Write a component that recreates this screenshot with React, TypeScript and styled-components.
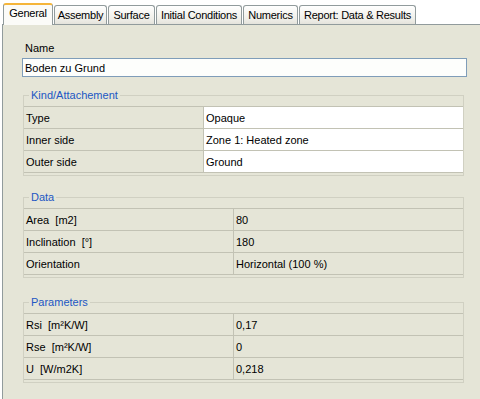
import React from "react";
import styled, { createGlobalStyle } from "styled-components";

const panelColor = "#e5e5d7";
const tabBorder = "#919b9c";
const frameColor = "#d0d0c2";
const rowLine = "#c2c2b4";

const GlobalStyle = createGlobalStyle`
  body {
    margin: 0;
    background: #ffffff;
    font-family: "Liberation Sans", Arial, sans-serif;
    font-size: 11px;
    color: #000000;
  }
`;

type Row = { label: string; value: string };

const tabs = [
  { label: "General", width: 50 },
  { label: "Assembly", width: 53 },
  { label: "Surface", width: 47 },
  { label: "Initial Conditions", width: 86 },
  { label: "Numerics", width: 55 },
  { label: "Report: Data & Results", width: 117 },
];

const kindRows: Row[] = [
  { label: "Type", value: "Opaque" },
  { label: "Inner side", value: "Zone 1: Heated zone" },
  { label: "Outer side", value: "Ground" },
];

const dataRows: Row[] = [
  { label: "Area  [m2]", value: "80" },
  { label: "Inclination  [°]", value: "180" },
  { label: "Orientation", value: "Horizontal (100 %)" },
];

const paramRows: Row[] = [
  { label: "Rsi  [m²K/W]", value: "0,17" },
  { label: "Rse  [m²K/W]", value: "0" },
  { label: "U  [W/m2K]", value: "0,218" },
];

const PropertyGroup = ({
  title,
  rows,
  split,
  white,
  gap,
}: {
  title: string;
  rows: Row[];
  split: number;
  white?: boolean;
  gap: number;
}) => (
  <Group $gap={gap}>
    <Legend>{title}</Legend>
    <Table>
      {rows.map((row) => (
        <TableRow key={row.label} $split={split}>
          <KeyCell>{row.label}</KeyCell>
          <ValueCell $white={white}>{row.value}</ValueCell>
        </TableRow>
      ))}
    </Table>
  </Group>
);

const App = () => {
  return (
    <Page>
      <GlobalStyle />
      <TabStrip>
        {tabs.map((tab, i) => (
          <Tab key={tab.label} $active={i === 0} $width={tab.width}>
            {tab.label}
          </Tab>
        ))}
      </TabStrip>
      <Panel>
        <NameLabel>Name</NameLabel>
        <NameInput readOnly value="Boden zu Grund" />
        <PropertyGroup title="Kind/Attachement" rows={kindRows} split={179} white gap={18} />
        <PropertyGroup title="Data" rows={dataRows} split={209} gap={21} />
        <PropertyGroup title="Parameters" rows={paramRows} split={209} gap={24} />
      </Panel>
    </Page>
  );
};

const Page = styled.div`
  width: 480px;
  height: 399px;
  display: flex;
  flex-direction: column;
  padding-left: 2px;
  box-sizing: border-box;
  overflow: hidden;
`;

const TabStrip = styled.div`
  height: 25px;
  flex: none;
  display: flex;
  align-items: flex-end;
  gap: 1px;
  padding-left: 1px;
  box-sizing: border-box;
  border-bottom: 1px solid ${tabBorder};
`;

const Tab = styled.div<{ $active?: boolean; $width: number }>`
  box-sizing: border-box;
  width: ${(p) => p.$width}px;
  height: ${(p) => (p.$active ? "22px" : "19px")};
  margin-bottom: ${(p) => (p.$active ? "-1px" : "0")};
  padding-top: ${(p) => (p.$active ? "1px" : "2px")};
  border: 1px solid ${tabBorder};
  border-bottom: none;
  border-top: ${(p) => (p.$active ? "2px solid #f5b53a" : `1px solid ${tabBorder}`)};
  border-radius: 3px 3px 0 0;
  background: ${(p) =>
    p.$active ? "#fbfbf8" : "linear-gradient(#ffffff, #f0efe9 70%, #e4e3dc)"};
  line-height: 14px;
  text-align: center;
  letter-spacing: -0.25px;
  white-space: nowrap;
  overflow: hidden;
`;

const Panel = styled.div`
  flex: 1;
  background: ${panelColor};
  border-left: 1px solid ${tabBorder};
  padding: 16px 13px 0 19px;
  display: flex;
  flex-direction: column;
`;

const NameLabel = styled.div`
  margin-left: 3px;
  line-height: 14px;
`;

const NameInput = styled.input`
  box-sizing: border-box;
  width: 100%;
  height: 19px;
  margin: 3px 0 0;
  padding: 0 2px;
  border: 1px solid #7f9db9;
  background: #fdfefc;
  font-family: inherit;
  font-size: 11px;
  color: #000000;
  outline: none;
`;

const Group = styled.div<{ $gap: number }>`
  position: relative;
  margin: ${(p) => p.$gap}px 3px 0 1px;
  padding: 10px 0 2px;
  border: 1px solid ${frameColor};
`;

const Legend = styled.span`
  position: absolute;
  top: -8px;
  left: 5px;
  padding: 0 2px;
  background: ${panelColor};
  color: #2257c4;
  line-height: 14px;
`;

const Table = styled.div`
  display: flex;
  flex-direction: column;
  border-bottom: 1px solid ${rowLine};
`;

const TableRow = styled.div<{ $split: number }>`
  display: grid;
  grid-template-columns: ${(p) => p.$split}px 1fr;
  height: 22px;
  box-sizing: border-box;
  border-top: 1px solid ${rowLine};
`;

const KeyCell = styled.div`
  display: flex;
  align-items: center;
  padding-left: 2px;
  white-space: pre;
`;

const ValueCell = styled.div<{ $white?: boolean }>`
  display: flex;
  align-items: center;
  padding-left: 2px;
  border-left: 1px solid ${rowLine};
  background: ${(p) => (p.$white ? "#ffffff" : "transparent")};
`;

export default App;
